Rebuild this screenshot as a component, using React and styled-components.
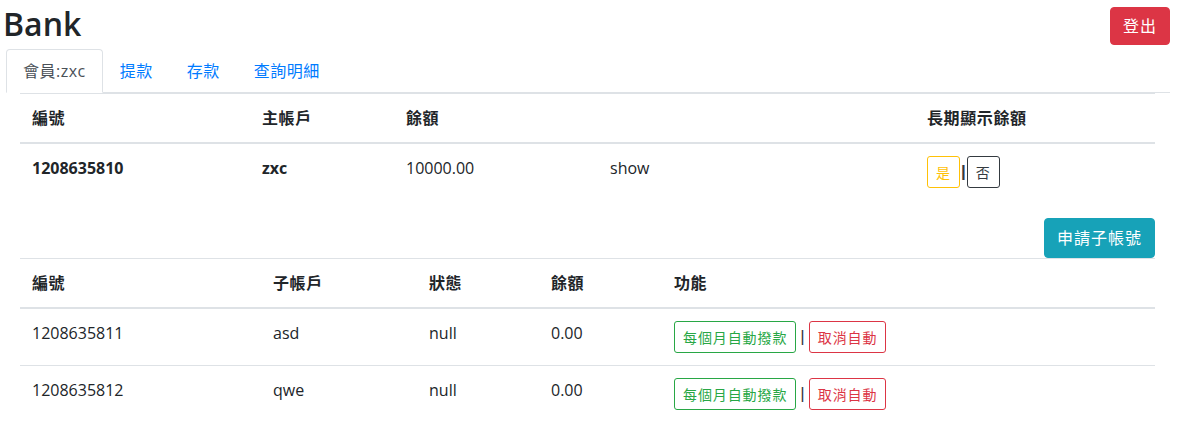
import React from "react";
import styled, { createGlobalStyle, css } from "styled-components";

const GlobalStyle = createGlobalStyle`
    body {
        margin: 0;
        background: #fff;
        color: #212529;
        font-family: "Open Sans", "Noto Sans CJK TC", sans-serif;
        font-size: 16px;
        line-height: 24px;
    }
    * {
        box-sizing: border-box;
    }
`;

const colors = {
    danger: "#dc3545",
    info: "#17a2b8",
    success: "#28a745",
    warning: "#ffc107",
    dark: "#343a40",
    primary: "#007bff",
    border: "#dee2e6",
};

const Page = styled.div`
    padding: 0 8px 0 6px;
`;

const Header = styled.header`
    display: flex;
    justify-content: space-between;
    align-items: flex-start;
    height: 49px;
`;

const Title = styled.h1`
    margin: 0 0 0 -3px;
    font-size: 32px;
    line-height: 47px;
    font-weight: 600;
`;

const Button = styled.button`
    font-family: inherit;
    font-size: 16px;
    line-height: 24px;
    letter-spacing: 1px;
    padding: 6px 12px;
    border-radius: 4px;
    border: 1px solid ${(p) => colors[p.$variant]};
    background: ${(p) => colors[p.$variant]};
    color: #fff;
    cursor: pointer;
`;

const LogoutButton = styled(Button)`
    margin-top: 7px;
`;

const Tabs = styled.ul`
    display: flex;
    list-style: none;
    margin: 0;
    padding: 0;
    border-bottom: 1px solid ${colors.border};
`;

const Tab = styled.li`
    margin-bottom: -1px;
    padding: 9px 16px;
    font-size: 16px;
    line-height: 24px;
    letter-spacing: 0.5px;
    border: 1px solid transparent;
    border-radius: 4px 4px 0 0;
    color: ${colors.primary};
    cursor: pointer;

    ${(p) =>
        p.$active &&
        css`
            color: #495057;
            background: #fff;
            border-color: ${colors.border} ${colors.border} #fff;
        `}
`;

const Content = styled.div`
    padding: 0 15px 0 14px;
`;

const Table = styled.table`
    width: 100%;
    border-collapse: collapse;
    table-layout: fixed;
`;

const Th = styled.th`
    text-align: left;
    padding: 12px;
    font-weight: 700;
    letter-spacing: 0.6px;
    border-top: 1px solid ${colors.border};
    border-bottom: 2px solid ${colors.border};
    vertical-align: bottom;
`;

const Td = styled.td`
    padding: 12px;
    vertical-align: top;
    border-top: ${(p) => (p.$first ? "none" : `1px solid ${colors.border}`)};
    font-weight: ${(p) => (p.$bold ? 700 : 400)};
`;

const Actions = styled.div`
    display: flex;
    align-items: center;
    height: 32px;
`;

const SmallButton = styled.button`
    font-family: inherit;
    font-size: 14px;
    line-height: 21px;
    letter-spacing: 0.9px;
    padding: 4px 8px;
    height: 32px;
    border-radius: 3px;
    border: 1px solid ${(p) => colors[p.$variant]};
    background: transparent;
    color: ${(p) => colors[p.$variant]};
    cursor: pointer;
`;

const Sep = styled.span`
    font-family: "Liberation Sans", sans-serif;
    font-size: 17px;
    color: #343a40;
    margin: 0 ${(p) => (p.$tight ? "1px" : "4px")};
    font-weight: ${(p) => (p.$tight ? 700 : 400)};
`;

const ApplyRow = styled.div`
    display: flex;
    justify-content: flex-end;
    margin-top: 18px;
`;

const ApplyButton = styled(Button)`
    padding: 7px 12px;
    position: relative;
    z-index: 1;
`;

const subAccounts = [
    { id: "1208635811", name: "asd", status: "null", balance: "0.00" },
    { id: "1208635812", name: "qwe", status: "null", balance: "0.00" },
];

export default function App() {
    return (
        <Page>
            <GlobalStyle />
            <Header>
                <Title>Bank</Title>
                <LogoutButton $variant="danger">登出</LogoutButton>
            </Header>
            <Tabs>
                <Tab $active>會員:zxc</Tab>
                <Tab>提款</Tab>
                <Tab>存款</Tab>
                <Tab>查詢明細</Tab>
            </Tabs>
            <Content>
                <Table>
                    <colgroup>
                        <col style={{ width: 230 }} />
                        <col style={{ width: 144 }} />
                        <col style={{ width: 204 }} />
                        <col style={{ width: 317 }} />
                        <col />
                    </colgroup>
                    <thead>
                        <tr>
                            <Th>編號</Th>
                            <Th>主帳戶</Th>
                            <Th>餘額</Th>
                            <Th></Th>
                            <Th>長期顯示餘額</Th>
                        </tr>
                    </thead>
                    <tbody>
                        <tr>
                            <Td $first $bold>1208635810</Td>
                            <Td $first $bold>zxc</Td>
                            <Td $first>10000.00</Td>
                            <Td $first>show</Td>
                            <Td $first>
                                <Actions>
                                    <SmallButton $variant="warning">是</SmallButton>
                                    <Sep $tight>|</Sep>
                                    <SmallButton $variant="dark">否</SmallButton>
                                </Actions>
                            </Td>
                        </tr>
                    </tbody>
                </Table>

                <ApplyRow>
                    <ApplyButton $variant="info">申請子帳號</ApplyButton>
                </ApplyRow>

                <Table>
                    <colgroup>
                        <col style={{ width: 241 }} />
                        <col style={{ width: 156 }} />
                        <col style={{ width: 122 }} />
                        <col style={{ width: 123 }} />
                        <col />
                    </colgroup>
                    <thead>
                        <tr>
                            <Th>編號</Th>
                            <Th>子帳戶</Th>
                            <Th>狀態</Th>
                            <Th>餘額</Th>
                            <Th>功能</Th>
                        </tr>
                    </thead>
                    <tbody>
                        {subAccounts.map((acc, i) => (
                            <tr key={acc.id}>
                                <Td $first={i === 0}>{acc.id}</Td>
                                <Td $first={i === 0}>{acc.name}</Td>
                                <Td $first={i === 0}>{acc.status}</Td>
                                <Td $first={i === 0}>{acc.balance}</Td>
                                <Td $first={i === 0}>
                                    <Actions>
                                        <SmallButton $variant="success">每個月自動撥款</SmallButton>
                                        <Sep>|</Sep>
                                        <SmallButton $variant="danger">取消自動</SmallButton>
                                    </Actions>
                                </Td>
                            </tr>
                        ))}
                    </tbody>
                </Table>
            </Content>
        </Page>
    );
}
